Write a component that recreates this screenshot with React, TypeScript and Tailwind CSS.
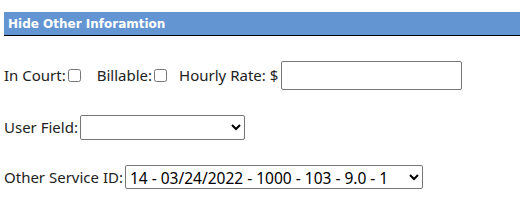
export default function App() {
  return (
    <div className="w-[520px] h-[211px] bg-white overflow-hidden pt-3 pl-1 font-['Noto_Sans',sans-serif] text-[15px] text-[#222]">
      {/* Section header */}
      <div className="h-6 bg-[#6395d2] border-b border-black flex items-center pl-1">
        <span className="font-['DejaVu_Sans',sans-serif] font-bold text-[12px] text-white">
          Hide Other Inforamtion
        </span>
      </div>

      {/* Row 1 */}
      <div className="mt-[25px] h-[29px] flex items-center">
        <span>In Court:</span>
        <input type="checkbox" className="ml-[2px] w-[13px] h-[13px]" />
        <span className="ml-[16px]">Billable:</span>
        <input type="checkbox" className="ml-[2px] w-[13px] h-[13px]" />
        <span className="ml-[12px]">Hourly Rate: $</span>
        <input
          type="text"
          className="ml-[3px] w-[181px] h-[29px] border border-[#767676] rounded-[2px]"
        />
      </div>

      {/* Row 2 */}
      <div className="mt-[25px] h-[25px] flex items-center">
        <span>User Field:</span>
        <select className="ml-[2px] w-[165px] h-[25px] border border-[#767676] rounded-[2px] bg-white text-black">
          <option></option>
        </select>
      </div>

      {/* Row 3 */}
      <div className="mt-[25px] h-[24px] flex items-center">
        <span>Other Service ID:</span>
        <select className="ml-[2px] w-[298px] h-[24px] border border-[#767676] rounded-[2px] bg-white text-black text-[15.5px]">
          <option>14 - 03/24/2022 - 1000 - 103 - 9.0 - 1</option>
        </select>
      </div>
    </div>
  );
}
